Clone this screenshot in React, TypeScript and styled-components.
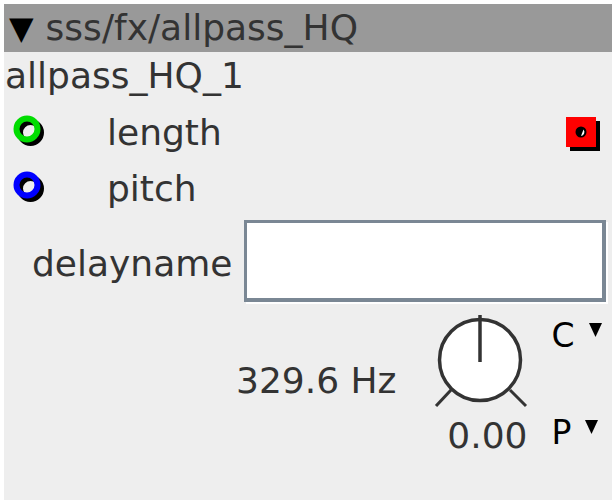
import React from 'react';
import styled, { createGlobalStyle } from 'styled-components';

const GlobalStyle = createGlobalStyle`
  body {
    margin: 0;
    background: #fff;
  }
`;

const Panel = styled.div`
  margin: 4px;
  width: 608px;
  height: 496px;
  background: #eeeeee;
  display: flex;
  flex-direction: column;
  font-family: 'DejaVu Sans', sans-serif;
  font-size: 36px;
  color: #333333;
`;
const TitleBar = styled.div`
  display: flex;
  align-items: center;
  gap: 12px;
  height: 48px;
  padding-left: 5px;
  background: #999999;
  line-height: 48px;
`;
const Caret = styled.span`
  color: #000;
  font-size: 32px;
`;
const InstanceName = styled.div`
  height: 50px;
  padding-left: 1px;
  line-height: 47px;
`;
const InletRow = styled.div`
  display: flex;
  align-items: center;
  height: 56px;
`;
const Inlet = styled.svg`
  margin: 4px 0 0 8px;
  width: 37px;
  height: 37px;
`;
const PortLabel = styled.span`
  flex: 1;
  margin-left: 58px;
  margin-top: 5px;
`;
const Outlet = styled.svg`
  margin-top: 8px;
  margin-right: 10px;
  width: 38px;
  height: 38px;
`;
const AttrRow = styled.div`
  display: flex;
  align-items: flex-start;
  gap: 12px;
  height: 92px;
  padding: 6px 0 0 28px;
  box-sizing: border-box;
`;
const AttrLabel = styled.span`
  margin-top: 23px;
`;
const TextBox = styled.div`
  box-sizing: border-box;
  width: 362px;
  height: 82px;
  background: #fff;
  border: 3px solid #7a8794;
  border-right-width: 4px;
  border-bottom-width: 4px;
  box-shadow: 2px 2px 0 #fff;
`;
const ParamRow = styled.div`
  flex: 1;
  display: flex;
  align-items: flex-start;
  padding: 6px 0 0 232px;
`;
const Freq = styled.span`
  margin: 49px 37px 0 0;
  line-height: 40px;
`;
const KnobCol = styled.div`
  display: flex;
  flex-direction: column;
  align-items: flex-end;
`;
const KnobValue = styled.span`
  margin: 8px 2px 0 0;
  line-height: 40px;
`;
const MenuCol = styled.div`
  display: flex;
  flex-direction: column;
  gap: 63px;
  margin-left: 22px;
  padding-top: 7px;
`;
const Menu = styled.div`
  display: flex;
  align-items: flex-start;
  gap: 14px;
  color: #000;
  font-size: 33px;
  line-height: 34px;
`;
const MenuArrow = styled.svg`
  margin-top: 4px;
  width: 13px;
  height: 14px;
`;

const Ring = ({ color }: { color: string }) => (
  <Inlet viewBox="0 0 37 37">
    <circle cx="18.5" cy="18.5" r="10.5" fill="none" stroke="#000" strokeWidth="6" />
    <circle cx="15" cy="15" r="10.5" fill="none" stroke={color} strokeWidth="6" />
  </Inlet>
);

const Knob = () => (
  <svg width="96" height="96" viewBox="0 0 96 96">
    <line x1="3" y1="94" x2="18" y2="78" stroke="#333" strokeWidth="3" />
    <line x1="93" y1="94" x2="77" y2="78" stroke="#333" strokeWidth="3" />
    <circle cx="47" cy="48" r="40.5" fill="#fff" stroke="#333" strokeWidth="3.5" />
    <line x1="47" y1="3" x2="47" y2="50" stroke="#333" strokeWidth="3.5" />
  </svg>
);

const Arrow = () => (
  <MenuArrow viewBox="0 0 13 14">
    <path d="M0 0 H13 L6.5 14 Z" fill="#000" />
  </MenuArrow>
);

export default function App() {
  return (
    <>
      <GlobalStyle />
      <Panel>
        <TitleBar>
          <Caret>▼</Caret>
          <span>sss/fx/allpass_HQ</span>
        </TitleBar>
        <InstanceName>allpass_HQ_1</InstanceName>
        <InletRow>
          <Ring color="#00dd00" />
          <PortLabel>length</PortLabel>
          <Outlet viewBox="0 0 38 38">
            <rect x="6" y="6" width="30" height="30" fill="#000" />
            <rect x="2" y="2" width="30" height="30" fill="#ff0000" />
            <circle cx="17" cy="17" r="5.5" fill="#000" />
            <path d="M19.5 14.5 A4 4 0 0 1 17 21 Z" fill="#fff" />
          </Outlet>
        </InletRow>
        <InletRow>
          <Ring color="#0000ff" />
          <PortLabel>pitch</PortLabel>
        </InletRow>
        <AttrRow>
          <AttrLabel>delayname</AttrLabel>
          <TextBox />
        </AttrRow>
        <ParamRow>
          <Freq>329.6 Hz</Freq>
          <KnobCol>
            <Knob />
            <KnobValue>0.00</KnobValue>
          </KnobCol>
          <MenuCol>
            <Menu>
              C<Arrow />
            </Menu>
            <Menu>
              P<Arrow />
            </Menu>
          </MenuCol>
        </ParamRow>
      </Panel>
    </>
  );
}
